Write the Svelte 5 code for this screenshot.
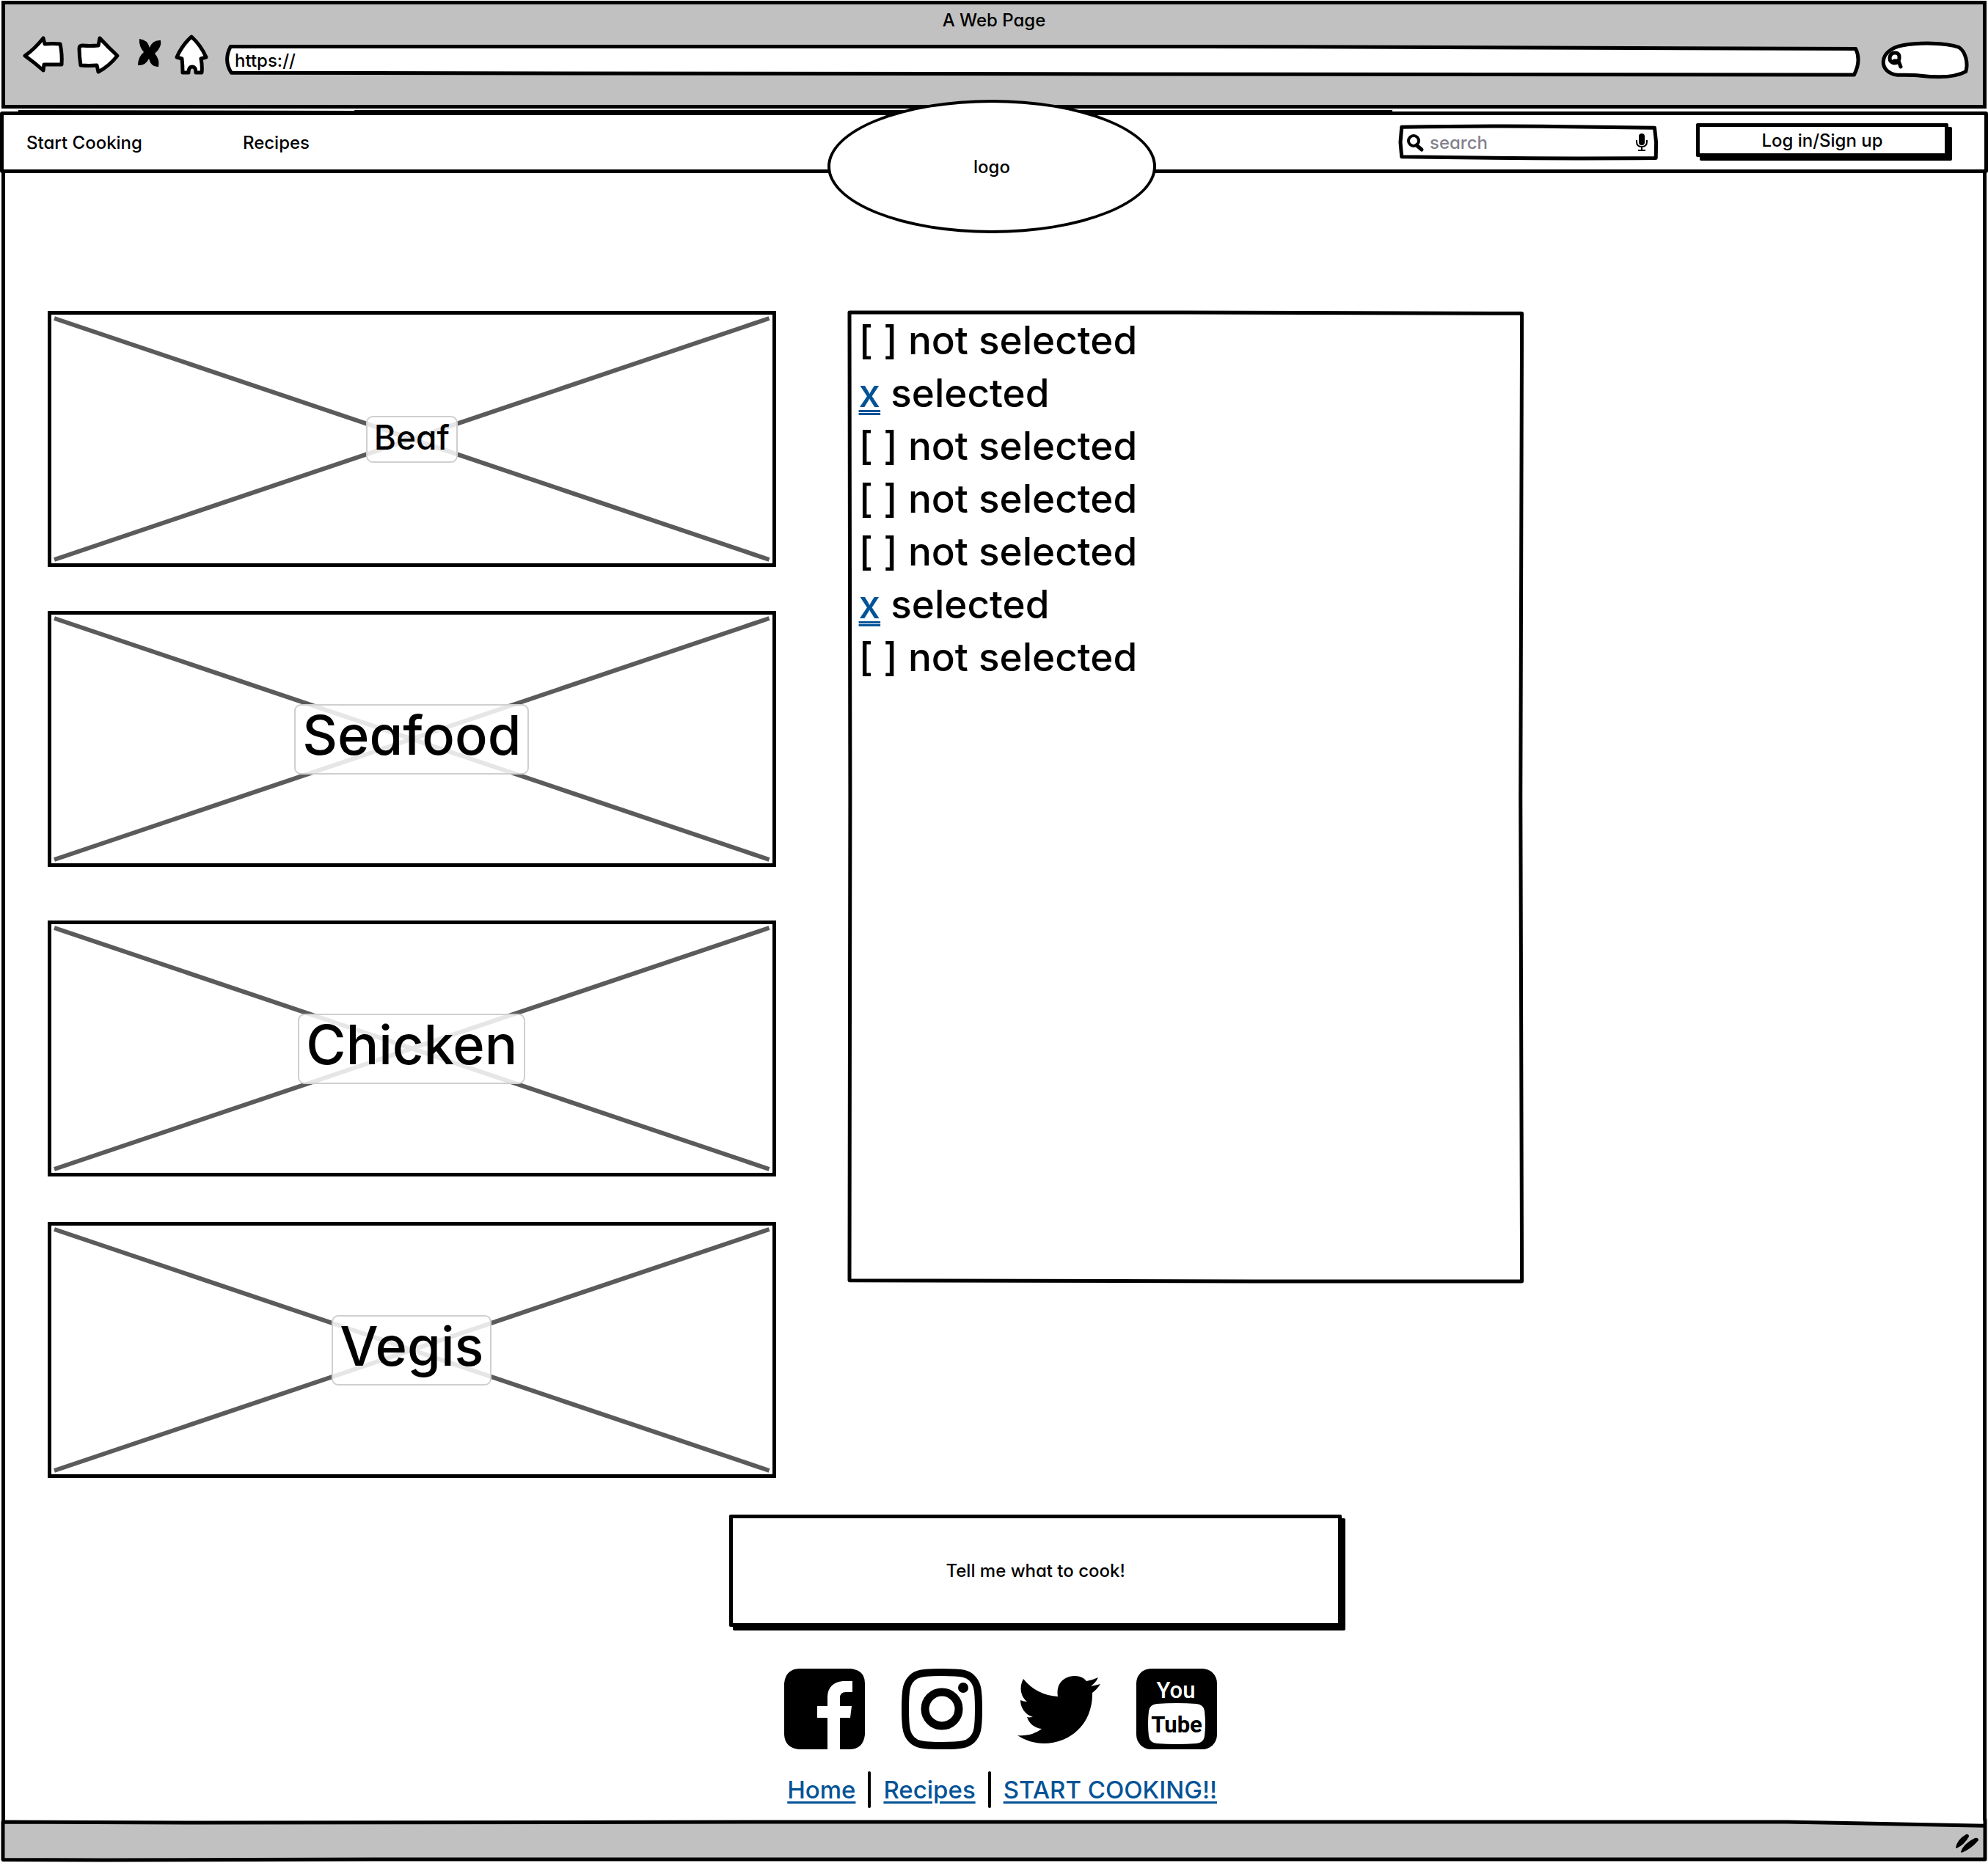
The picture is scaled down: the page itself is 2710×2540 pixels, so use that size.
<script>
  const categories = [
    { name: 'Beaf', size: 'small' },
    { name: 'Seafood', size: 'large' },
    { name: 'Chicken', size: 'large' },
    { name: 'Vegis', size: 'large' }
  ];

  const options = [false, true, false, false, false, true, false];
</script>

{#snippet outline(d, fill = 'none')}
  <svg class="outline" viewBox="0 0 100 100" preserveAspectRatio="none" aria-hidden="true">
    <path {d} {fill} stroke="#000" stroke-width="5" stroke-linejoin="round" vector-effect="non-scaling-stroke" />
  </svg>
{/snippet}

<div class="page">
  <header class="chrome">
    <div class="title">A Web Page</div>
    <div class="toolbar">
      <button class="tool back" aria-label="Back">
        <svg viewBox="31 48 56 52" width="56" height="52">
          <path d="M34 75 Q47 66 59 51 L61 59 Q72 58 82 59 Q85 73 84 87 Q72 87 60 87 L59 95 Q48 85 34 75Z" />
        </svg>
      </button>
      <button class="tool" aria-label="Forward">
        <svg viewBox="105 48 58 52" width="58" height="52">
          <path d="M108 65 Q108 61 112 61 Q122 62 134 61 L136 51 Q148 64 160 75 Q149 89 134 97 L132 88 Q121 89 110 88 Q108 76 108 65Z" />
        </svg>
      </button>
      <button class="tool stop" aria-label="Stop">
        <svg viewBox="188 48 32 52" width="32" height="52">
          <path class="solid" d="M190 52 Q201 53 204 64 Q208 53 219 54 Q221 63 211 72 Q218 80 216 90 Q206 91 203 79 Q198 89 188 88 Q188 77 196 70 Q189 62 190 52Z" />
        </svg>
      </button>
      <button class="tool" aria-label="Home">
        <svg viewBox="237 48 46 52" width="46" height="52">
          <path d="M260 49 Q273 61 280 77 L273 79 Q275 89 274 98 L266 98 Q266 90 261 90 Q256 90 256 98 L248 98 Q248 88 247 79 L240 77 Q247 61 260 49Z" />
        </svg>
      </button>
      <label class="address">
        {@render outline('M0.15 1 L60 1 L99.85 9 Q100.2 50 99.75 100 L50 97 L0.2 93 Q-0.3 50 0.15 1Z', '#fff')}
        <input type="text" value="https://" aria-label="Address" />
      </label>
      <label class="websearch">
        {@render outline('M18 94 C-5 88 -6 20 24 6 C42 -2 74 -3 90 12 C98 25 101 60 98 84 C85 102 62 101 45 96 C35 93 26 94 18 94Z', '#fff')}
        <svg viewBox="0 0 22 26" width="22" height="26" aria-hidden="true">
          <path d="M10 3 Q17 3 16 11 Q15 17 9 17 Q3 16 3 10 Q4 3 10 3Z M9 14 L15 14 L18 22" fill="none" stroke="#000" stroke-width="5" stroke-linecap="round" />
        </svg>
        <input type="text" aria-label="Web search" />
      </label>
    </div>
  </header>

  <nav class="site-nav">
    <svg class="streak" viewBox="0 0 2710 8" preserveAspectRatio="none" aria-hidden="true">
      <path d="M20 0 L480 1 L480 0 L1900 0 L1900 2 L2690 4 L2690 5 L1540 3 L1300 5 L20 5Z" />
    </svg>
    <a href="#cook">Start Cooking</a>
    <a class="recipes" href="#recipes">Recipes</a>
    <label class="search">
      {@render outline('M0.5 3 Q35 -2 60 1 L99 5 L99.6 50 L99.5 99 Q60 101 30 98 L0.5 95 L0 50Z')}
      <svg viewBox="0 0 22 23" width="22" height="23" aria-hidden="true">
        <circle cx="9" cy="9" r="7" fill="none" stroke="#000" stroke-width="4" />
        <path d="M13 15 L20 21" stroke="#000" stroke-width="5" stroke-linecap="round" />
      </svg>
      <input type="search" placeholder="search" aria-label="Search recipes" />
      <svg viewBox="0 0 16 24" width="16" height="24" aria-hidden="true">
        <rect x="4" y="0" width="8" height="16" rx="4" />
        <path d="M1 9 V11 Q1 18 8 18 Q15 18 15 11 V9 M8 18 V23 M3 23 H13" fill="none" stroke="#000" stroke-width="2" />
      </svg>
    </label>
    <button class="raised login">Log in/Sign up</button>
    <div class="logo">logo</div>
  </nav>

  <main>
    <div class="columns">
      <div class="cards">
        {#each categories as category}
          <section class="card">
            <svg class="cross" viewBox="0 0 100 100" preserveAspectRatio="none" aria-hidden="true">
              <path d="M0 0 L100 100 M100 0 L0 100" stroke="#5b5b5c" stroke-width="6" vector-effect="non-scaling-stroke" />
            </svg>
            <h2 class={category.size}>{category.name}</h2>
          </section>
        {/each}
      </div>
      <ul class="options">
        {@render outline('M0 0 L50 0 L100 0.1 L99.8 50 L100 100 L60 100 L0 99.9 L0.1 50Z')}
        {#each options as selected}
          <li>
            {#if selected}<a href="#toggle">x</a> selected{:else}[ ] not selected{/if}
          </li>
        {/each}
      </ul>
    </div>

    <button class="raised ask">Tell me what to cook!</button>

    <div class="social">
      <a href="#facebook" aria-label="Facebook">
        <svg viewBox="0 0 110 110" width="110" height="110">
          <path d="M20 0 H90 Q110 2 110 20 V90 Q108 109 90 110 H76 V67 H90 L92 51 H76 V40 Q76 32 84 32 H93 V17 H80 Q60 19 59 38 V51 H45 V67 H59 V110 H20 Q1 108 0 90 V20 Q2 1 20 0Z" />
        </svg>
      </a>
      <a href="#instagram" aria-label="Instagram">
        <svg viewBox="0 0 110 110" width="110" height="110">
          <path d="M55 5 C85 5 90 7 96 13 C103 20 105 27 105 55 C105 83 103 90 96 97 C90 103 83 105 55 105 C27 105 20 103 14 97 C7 90 5 83 5 55 C5 27 7 20 14 13 C20 7 27 5 55 5Z" fill="none" stroke="#000" stroke-width="10" />
          <circle cx="55" cy="55" r="23" fill="none" stroke="#000" stroke-width="11" />
          <circle cx="84" cy="26" r="7" />
        </svg>
      </a>
      <a href="#twitter" aria-label="Twitter">
        <svg viewBox="0 0 110 110" width="110" height="110">
          <path d="M6 14 C18 29 35 37 53 38 C50 21 61 10 76 10 C83 10 88 12 92 17 C98 16 103 14 108 12 C106 17 102 21 98 24 C103 23 107 22 111 21 C108 26 104 30 100 33 C101 75 70 102 34 102 C21 102 9 98 -2 91 C11 92 22 89 31 82 C21 81 14 75 11 66 C14 67 17 66 19 66 C9 63 2 54 2 43 C5 44 8 45 11 45 C2 38 0 25 6 14Z" />
        </svg>
      </a>
      <a href="#youtube" aria-label="YouTube">
        <svg viewBox="0 0 110 110" width="110" height="110">
          <rect width="110" height="110" rx="20" />
          <path d="M28 48 Q55 46 82 48 Q92 49 93 58 Q95 75 93 92 Q92 101 82 102 Q55 104 28 102 Q18 101 17 92 Q15 75 17 58 Q18 49 28 48Z" fill="#fff" />
          <text class="you" x="54" y="40" text-anchor="middle" fill="#fff">You</text>
          <text class="tube" x="55" y="87" text-anchor="middle">Tube</text>
        </svg>
      </a>
    </div>

    <div class="links">
      <a href="#home">Home</a>
      <span class="rule"></span>
      <a href="#recipes">Recipes</a>
      <span class="rule"></span>
      <a href="#cook">START COOKING!!</a>
    </div>
  </main>

  <footer>
    {@render outline('M0 0 L10 2 L40 0 L90 0 L100 10 L100 -6 L100 98 L20 98 L5 100 L0 99Z', '#c1c1c1')}
    <svg class="grip" viewBox="0 0 32 26" width="32" height="26" aria-hidden="true">
      <path d="M0 19 Q2 8 14 1 Q18 0 18 4 Q12 15 1 20Z M7 25 Q10 14 26 6 Q31 5 31 9 Q21 21 8 26Z" />
    </svg>
  </footer>
</div>

<style>
  :global(body) {
    margin: 0;
    background: #fff;
  }

  .page {
    display: flex;
    flex-direction: column;
    min-height: 100vh;
    box-sizing: border-box;
    padding: 1px 0 2px;
    overflow: hidden;
    font-family: Inter, 'Liberation Sans', sans-serif;
    font-feature-settings: 'cv11';
    font-weight: 500;
    font-size: 24px;
    color: #000;
  }

  .page :global(*) {
    box-sizing: border-box;
  }

  button,
  input {
    font: inherit;
    font-feature-settings: inherit;
    color: inherit;
    padding: 0;
    border: 0;
    background: none;
  }

  input {
    position: relative;
    flex: 1;
    min-width: 0;
    outline: none;
    appearance: none;
  }

  svg {
    display: block;
    flex: none;
    overflow: visible;
  }

  .outline {
    position: absolute;
    top: 2px;
    left: 2px;
    width: calc(100% - 4px);
    height: calc(100% - 4px);
  }

  .chrome {
    margin: 0 2px;
    border: 5px solid #000;
    background: #c1c1c1;
    height: 147px;
  }

  .title {
    line-height: 43px;
    text-align: center;
  }

  .toolbar {
    display: flex;
    align-items: flex-start;
    gap: 18px;
    padding: 0 19px 0 24px;
  }

  .tool path {
    fill: #fff;
    stroke: #000;
    stroke-width: 5px;
    stroke-linejoin: round;
  }

  .tool .solid {
    fill: #000;
    stroke: none;
  }

  .stop {
    margin-left: 7px;
  }

  .address,
  .websearch,
  .search {
    position: relative;
    display: flex;
    align-items: center;
  }

  .address {
    flex: 1;
    height: 43px;
    margin: 12px 11px 0 7px;
    padding: 0 11px;
  }

  .websearch {
    width: 120px;
    height: 50px;
    margin-top: 8px;
    padding: 0 12px 0 9px;
  }

  .websearch svg:not(.outline) {
    position: relative;
  }

  .site-nav {
    position: relative;
    display: flex;
    align-items: center;
    height: 84px;
    margin-top: 4px;
    padding: 0 49px 0 31px;
    border: 5px solid #000;
    border-radius: 3px;
    background: #fff;
  }

  .site-nav a {
    color: inherit;
    text-decoration: none;
  }

  .site-nav .recipes {
    margin-left: 137px;
  }

  .streak {
    position: absolute;
    top: -7px;
    left: 0;
    width: 100%;
    height: 8px;
  }

  .search {
    width: 354px;
    height: 48px;
    margin-left: auto;
    padding: 0 15px 0 11px;
    gap: 9px;
  }

  .search input::placeholder {
    color: #82828c;
    opacity: 1;
  }

  .raised {
    border: 5px solid #000;
    border-radius: 2px;
    background: #fff;
    box-shadow: 5px 5px 0 #000;
  }

  .login {
    width: 344px;
    height: 46px;
    margin: 0 0 6px 51px;
  }

  .logo {
    position: absolute;
    top: -21px;
    left: calc(50% - 227px);
    display: flex;
    align-items: center;
    justify-content: center;
    width: 448px;
    height: 182px;
    border: 4px solid #000;
    border-radius: 50%;
    background: #fff;
  }

  main {
    flex: 1;
    margin: 0 2px;
    padding: 188px 0 16px;
    border: solid #000;
    border-width: 0 5px;
  }

  .columns {
    display: grid;
    grid-template-columns: 993fr 921fr 529fr;
    column-gap: 98px;
    align-items: start;
    padding-left: 58px;
  }

  .card {
    position: relative;
    display: flex;
    align-items: center;
    justify-content: center;
    height: 349px;
    margin-bottom: 60px;
    border: 5px solid #000;
  }

  .card:nth-child(2) {
    margin-bottom: 73px;
  }

  .card:nth-child(3) {
    margin-bottom: 62px;
  }

  .card:last-child {
    margin-bottom: 50px;
  }

  .cross {
    position: absolute;
    top: 5px;
    left: 4px;
    width: calc(100% - 8px);
    height: calc(100% - 10px);
  }

  h2 {
    position: relative;
    margin: 0;
    border: 2px solid #cfcfcf;
    border-radius: 9px;
    background: rgba(255, 255, 255, 0.85);
    font-weight: 500;
  }

  .small {
    padding: 0 9px 6px;
    font-size: 46px;
    line-height: 54px;
  }

  .large {
    padding: 0 9px 12px;
    font-size: 74px;
    line-height: 80px;
  }

  .options {
    position: relative;
    height: 1325px;
    margin: 0;
    padding: 4px 15px;
    list-style: none;
    font-size: 53px;
    line-height: 72px;
  }

  .options li {
    position: relative;
  }

  .options a {
    color: #045397;
    text-decoration: underline double 3px;
    text-underline-offset: 4px;
  }

  .ask {
    display: block;
    width: 31%;
    height: 153px;
    margin: 0 0 57px 36.6%;
  }

  .social,
  .links {
    display: flex;
    align-items: center;
    margin-left: 39.4%;
  }

  .social {
    gap: 50px;
    margin-bottom: 30px;
  }

  .you {
    font: 500 31px Roboto, 'Liberation Sans', sans-serif;
  }

  .tube {
    font: 700 31px Roboto, 'Liberation Sans', sans-serif;
  }

  .links {
    gap: 17px;
    padding-left: 4px;
    font-size: 33px;
  }

  .links a {
    color: #045397;
    text-decoration: underline 3px;
    text-underline-offset: 4px;
  }

  .rule {
    width: 4px;
    height: 50px;
    border-radius: 2px;
    background: #000;
  }

  footer {
    position: relative;
    display: flex;
    align-items: center;
    justify-content: flex-end;
    height: 56px;
    margin: 0 2px;
    padding: 6px 10px 0 0;
  }

  .grip {
    position: relative;
  }
</style>
